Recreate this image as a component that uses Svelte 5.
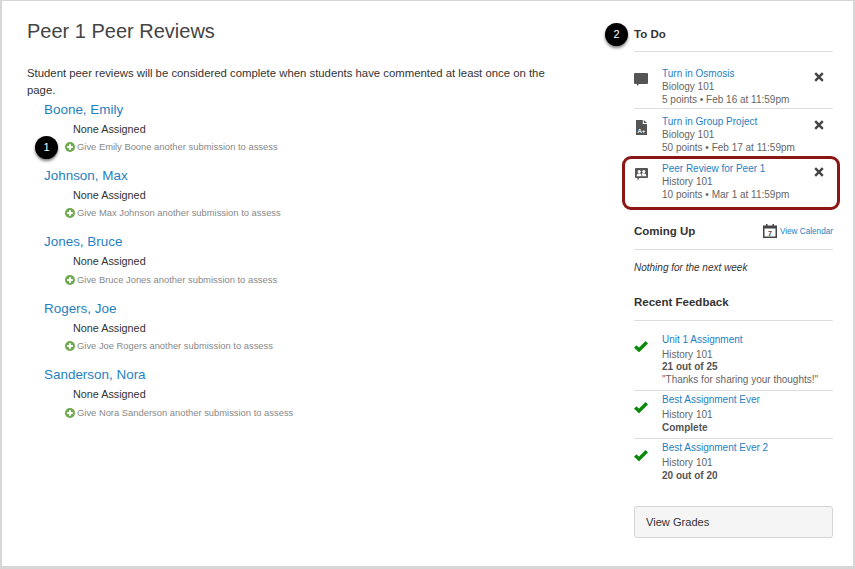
<script lang="ts">
	const students = [
		{ name: 'Boone, Emily', full: 'Emily Boone' },
		{ name: 'Johnson, Max', full: 'Max Johnson' },
		{ name: 'Jones, Bruce', full: 'Bruce Jones' },
		{ name: 'Rogers, Joe', full: 'Joe Rogers' },
		{ name: 'Sanderson, Nora', full: 'Nora Sanderson' }
	];

	const todos = [
		{ title: 'Turn in Osmosis', course: 'Biology 101', meta: '5 points • Feb 16 at 11:59pm', icon: 'chat' },
		{ title: 'Turn in Group Project', course: 'Biology 101', meta: '50 points • Feb 17 at 11:59pm', icon: 'doc' },
		{ title: 'Peer Review for Peer 1', course: 'History 101', meta: '10 points • Mar 1 at 11:59pm', icon: 'peer' }
	];

	const feedback = [
		{ title: 'Unit 1 Assignment', score: '21 out of 25', note: '"Thanks for sharing your thoughts!"' },
		{ title: 'Best Assignment Ever', score: 'Complete', note: '' },
		{ title: 'Best Assignment Ever 2', score: '20 out of 20', note: '' }
	];
</script>

<div class="frame">
	<main class="content">
		<h1>Peer 1 Peer Reviews</h1>
		<p class="intro">Student peer reviews will be considered complete when students have commented at least once on the page.</p>
		{#each students as student, i}
			<section class="student">
				<a class="studentName" href="#top">{student.name}</a>
				<div class="assigned">None Assigned</div>
				<div class="give">
					{#if i === 0}<span class="badge badgeOne">1</span>{/if}
					<svg class="plus" width="10" height="10" viewBox="0 0 10 10">
						<circle cx="5" cy="5" r="5" fill="#6fa84f" />
						<path d="M5 2.200v5.600M2.200 5h5.600" stroke="#fff" stroke-width="2" />
					</svg>
					<span>Give {student.full} another submission to assess</span>
				</div>
			</section>
		{/each}
	</main>

	<aside class="sidebar">
		<h2 class="todoHead"><span class="badge badgeTwo">2</span>To Do</h2>
		<ul class="todoList">
			{#each todos as todo}
				<li class="todo" class:highlight={todo.icon === 'peer'}>
					<span class="todoIcon">
						{#if todo.icon === 'chat'}
							<svg width="14" height="13" viewBox="0 0 14 13"><path d="M1 0h12a1 1 0 0 1 1 1v9a1 1 0 0 1-1 1H5L3 13v-2H1a1 1 0 0 1-1-1V1a1 1 0 0 1 1-1z" fill="#555" /></svg>
						{:else if todo.icon === 'doc'}
							<svg class="docIcon" width="11" height="15" viewBox="0 0 11 15">
								<path d="M0 0h6.800v4H11V15H0z" fill="#555" />
								<path d="M7.800 0L11 3H7.800z" fill="#555" />
								<text x="1.500" y="12.500" class="docText">A+</text>
							</svg>
						{:else}
							<svg class="peerIcon" width="13" height="13" viewBox="0 0 13 13">
								<path d="M1 0h11a1 1 0 0 1 1 1v8a1 1 0 0 1-1 1H4.500L2.500 12.500V10H1a1 1 0 0 1-1-1V1a1 1 0 0 1 1-1z" fill="#555" />
								<circle cx="4.200" cy="3.500" r="1.600" fill="#fff" />
								<circle cx="8.800" cy="3.500" r="1.600" fill="#fff" />
								<path d="M1.700 8.200c0-2 1-3 2.500-3s2.500 1 2.500 3zM7.300 8.200c0-1.300-.2-2-.7-2.600.6-.4 1.300-.4 2.200-.4 1.500 0 2.500 1 2.500 3z" fill="#fff" />
							</svg>
						{/if}
					</span>
					<div class="todoBody">
						<a href="#top">{todo.title}</a>
						<div class="muted">{todo.course}</div>
						<div class="muted">{todo.meta}</div>
					</div>
					<svg class="dismiss" width="10" height="10" viewBox="0 0 10 10">
						<path d="M1.200 1.200l7.600 7.600M8.800 1.200L1.200 8.800" stroke="#444" stroke-width="2.400" />
					</svg>
				</li>
			{/each}
		</ul>

		<div class="comingHead">
			<h2>Coming Up</h2>
			<a class="calendar" href="#top">
				<svg width="14" height="14" viewBox="0 0 14 14">
					<path d="M0 1.500h14V14H0z" fill="#444" />
					<path d="M3 0h1.500v2H3zM9.500 0H11v2H9.500z" fill="#444" />
					<rect x="1.500" y="4.500" width="11" height="8" fill="#fff" />
					<text x="5" y="11.500" class="calText">7</text>
				</svg>
				View Calendar
			</a>
		</div>
		<p class="nothing">Nothing for the next week</p>

		<h2 class="feedbackHead">Recent Feedback</h2>
		<ul class="feedbackList">
			{#each feedback as item}
				<li class="feedback">
					<svg class="check" width="14" height="11" viewBox="0 0 14 11">
						<path d="M1.200 5.500l3.800 3.500 7.800-7.800" fill="none" stroke="#0a8a0a" stroke-width="3.400" />
					</svg>
					<div class="feedbackBody">
						<a href="#top">{item.title}</a>
						<div class="muted course">History 101</div>
						<div class="score">{item.score}</div>
						{#if item.note}<div class="muted">{item.note}</div>{/if}
					</div>
				</li>
			{/each}
		</ul>

		<button class="grades" type="button">View Grades</button>
	</aside>
</div>

<style>
	:global(body) {
		background: #d6d6d6;
	}

	.frame {
		box-sizing: border-box;
		width: 851px;
		height: 565px;
		margin: 1px 0 0 2px;
		display: grid;
		grid-template-columns: 632px 199px;
		background: #fff;
		box-shadow: 0 2px 0 #a8a8a8;
		font-family: 'Liberation Sans', Arial, sans-serif;
		color: #333;
	}

	a {
		color: #1f7fc1;
		text-decoration: none;
	}

	.content {
		padding: 17px 0 0 25px;
	}

	h1 {
		margin: 0;
		font-size: 20px;
		line-height: 26px;
		font-weight: 400;
		color: #444;
	}

	.intro {
		width: 530px;
		margin: 21px 0 0;
		font-size: 11.350px;
		line-height: 17px;
	}

	.student {
		padding-left: 17px;
		height: 66.400px;
	}

	.studentName {
		display: block;
		font-size: 13.450px;
		line-height: 18px;
		padding-top: 1.500px;
	}

	.assigned {
		margin: 3px 0 0 29px;
		font-size: 10.800px;
		line-height: 15px;
	}

	.give {
		position: relative;
		display: flex;
		align-items: center;
		gap: 2px;
		margin: 2.500px 0 0 21px;
		font-size: 9.400px;
		line-height: 16px;
		color: #888;
	}

	.badge {
		position: absolute;
		width: 23px;
		height: 23px;
		border-radius: 50%;
		background: #000;
		color: #fff;
		font-size: 11px;
		font-weight: 400;
		line-height: 23px;
		text-align: center;
		box-shadow: 0 2px 3px rgba(0, 0, 0, 0.5);
	}

	.badgeOne {
		left: -30px;
		top: -3px;
	}

	.badgeTwo {
		left: -29px;
		top: -3px;
	}

	.sidebar {
		padding-top: 25px;
	}

	h2 {
		margin: 0;
		font-size: 11.500px;
		line-height: 16px;
		font-weight: 700;
		color: #333;
	}

	.todoHead {
		position: relative;
		padding-bottom: 9px;
		border-bottom: 1px solid #ddd;
	}

	.todoList,
	.feedbackList {
		list-style: none;
		margin: 0;
		padding: 0;
	}

	.todoList {
		margin-top: 8.500px;
	}

	.todo {
		position: relative;
		display: flex;
		height: 41.500px;
		padding-top: 6px;
		font-size: 10px;
		line-height: 13px;
	}

	.todo + .todo {
		border-top: 1px solid #ddd;
	}

	.todo.highlight {
		border-top: 0;
		padding-top: 5px;
	}

	.highlight::after {
		content: '';
		position: absolute;
		left: -12px;
		right: -7px;
		top: -0.500px;
		height: 48px;
		border: 3px solid #8c1515;
		border-radius: 9px;
	}

	.todoIcon {
		width: 28px;
		padding-top: 6px;
		line-height: 0;
	}

	.docIcon {
		margin: -1.500px 0 0 2px;
	}

	.peerIcon {
		margin-left: 1px;
	}

	.todoBody {
		flex: 1;
	}

	.todoBody a,
	.feedbackBody a {
		display: block;
	}

	.muted {
		color: #666;
	}

	.docText {
		font-size: 6px;
		font-weight: 700;
		fill: #fff;
	}

	.dismiss {
		margin: 5px 9px 0 0;
	}

	.comingHead {
		display: flex;
		align-items: center;
		justify-content: space-between;
		height: 36px;
		margin-top: 10px;
		border-bottom: 1px solid #ddd;
	}

	.calendar {
		display: flex;
		align-items: center;
		gap: 3px;
		font-size: 8.200px;
	}

	.calText {
		font-size: 7px;
		font-weight: 700;
		fill: #444;
	}

	.nothing {
		margin: 10.500px 0 0;
		font-size: 10px;
		line-height: 14px;
		font-style: italic;
	}

	.feedbackHead {
		margin-top: 19.500px;
		padding-bottom: 9.500px;
		border-bottom: 1px solid #ddd;
	}

	.feedbackList {
		margin-top: 13px;
	}

	.feedback {
		display: flex;
		font-size: 10px;
		line-height: 12.500px;
		padding-bottom: 3.500px;
	}

	.feedback + .feedback {
		border-top: 1px solid #ddd;
		padding-top: 3.500px;
	}

	.check {
		width: 14px;
		flex: none;
		margin: 7.500px 14px 0 0;
	}

	.course {
		margin-top: 2.500px;
	}

	.score {
		font-weight: 700;
		color: #555;
	}

	.grades {
		display: block;
		width: 100%;
		height: 32px;
		margin-top: 20px;
		padding: 0 11px;
		text-align: left;
		background: #f5f5f5;
		border: 1px solid #d4d4d4;
		border-radius: 3px;
		font: 11.100px 'Liberation Sans', Arial, sans-serif;
		color: #333;
	}
</style>
